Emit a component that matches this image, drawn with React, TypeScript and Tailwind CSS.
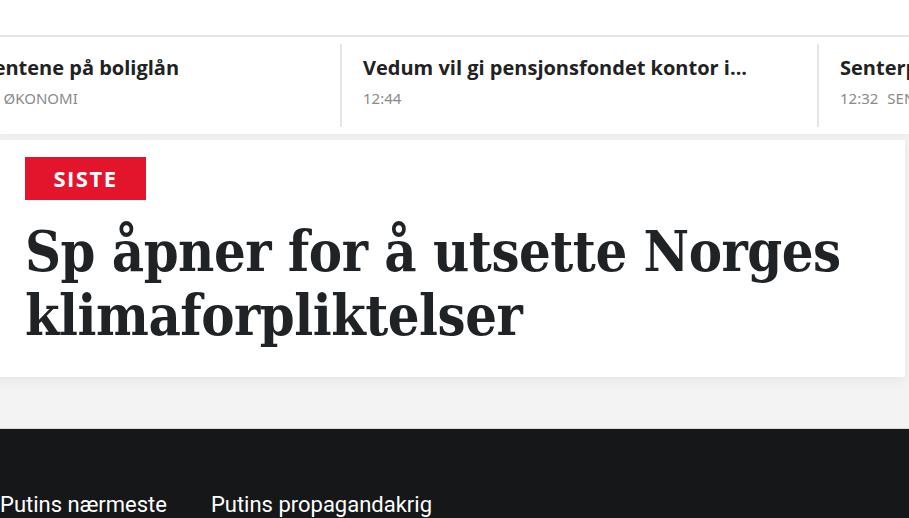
import React from "react";

const items = [
  { title: "DNB øker rentene på boliglån", time: "Oppdatert 12:58", cat: "ØKONOMI", gap: "ml-[4px]" },
  { title: "Vedum vil gi pensjonsfondet kontor i...", time: "12:44", cat: "", gap: "ml-[9px]" },
  { title: "Senterpartiet vil utsette klimamål", time: "12:32", cat: "SENTERPARTIET", gap: "ml-[9px]" },
];

export default function App() {
  return (
    <div className="w-[909px] h-[518px] overflow-hidden bg-[#f3f3f3] relative" style={{ fontFamily: "'Open Sans', 'Noto Sans', sans-serif" }}>
      <div className="h-[35px] bg-white" />
      <div className="h-[2px] bg-[#e6e6e6]" />
      <div className="h-[97px] bg-white overflow-hidden shadow-[0_2px_6px_rgba(0,0,0,0.04)]">
        <div className="flex ml-[-137px] pt-[7px]">
          {items.map((it, i) => (
            <div key={i} className={"w-[477px] shrink-0 h-[83px] pl-[21px] " + (i > 0 ? "border-l-2 border-[#e5e5e5]" : "")}>
              <div className="pt-[10px] text-[20px] font-bold text-[#222] leading-[27px] whitespace-nowrap">{it.title}</div>
              <div className="mt-[7px] text-[15px] text-[#8a8a8a] leading-[20px] whitespace-nowrap" style={{ fontFamily: "'Noto Sans', sans-serif" }}>
                {it.time}
                {it.cat ? <span className={it.gap}>{it.cat}</span> : null}
              </div>
            </div>
          ))}
        </div>
      </div>
      <div className="h-[6px]" />
      <div className="ml-[-20px] w-[925px] h-[237px] bg-white shadow-[0_3px_10px_rgba(0,0,0,0.06)] pl-[45px] pt-[17px]">
        <div className="w-[121px] h-[43px] bg-[#e3152d] flex items-center justify-center text-white font-bold text-[22px] tracking-[1.5px]">SISTE</div>
        <h1 className="mt-[20px] text-[#1f2326] font-bold text-[55.5px] leading-[64px] tracking-[-0.5px]" style={{ fontFamily: "'DejaVu Serif Condensed', 'DejaVu Serif', serif" }}>
          Sp åpner for å utsette Norges klimaforpliktelser
        </h1>
      </div>
      <div className="absolute left-0 top-[428px] w-[909px] h-[1px] bg-[#d9d9d9]" />
      <div className="absolute left-0 top-[429px] w-[909px] h-[89px] bg-[#161718]">
        <div className="flex gap-[44px] pt-[61px] text-white text-[22px] leading-[30px]" style={{ fontFamily: "'Liberation Sans Narrow', 'Roboto', sans-serif" }}>
          <span>Putins nærmeste</span>
          <span>Putins propagandakrig</span>
        </div>
      </div>
    </div>
  );
}
